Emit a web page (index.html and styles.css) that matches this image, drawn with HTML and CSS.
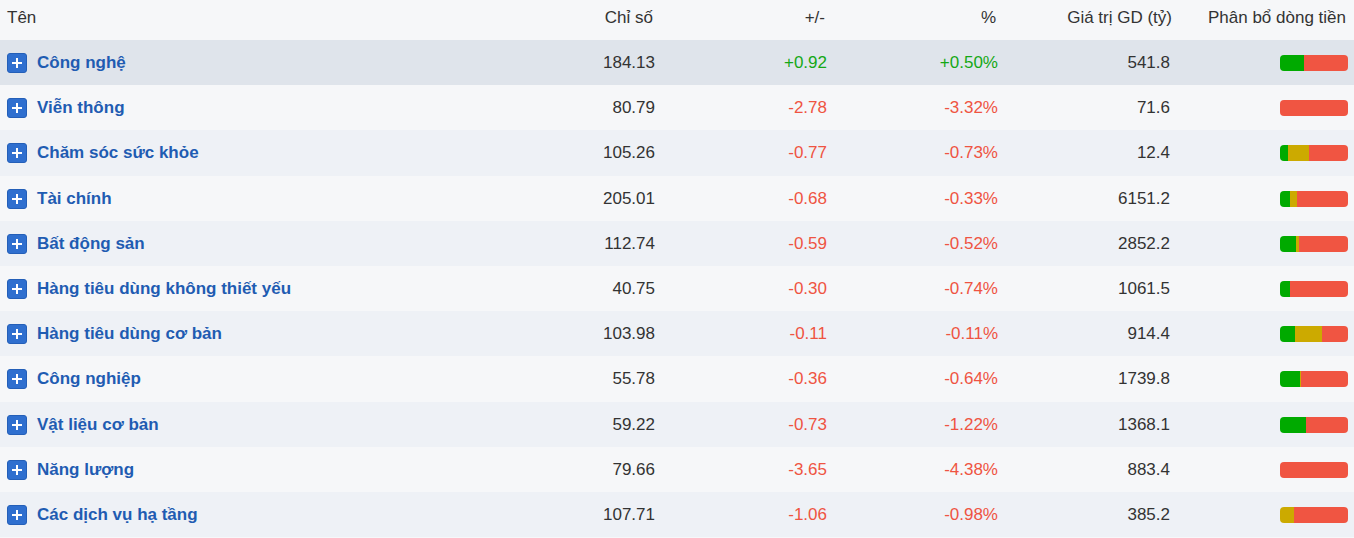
FILE: index.html
```html
<!DOCTYPE html>
<html lang="vi">
<head>
<meta charset="utf-8">
<link rel="stylesheet" href="styles.css">
</head>
<body>
<div class="table">
  <div class="row head">
    <div class="c name">Tên</div>
    <div class="c num">Chỉ số</div>
    <div class="c num">+/-</div>
    <div class="c num">%</div>
    <div class="c num gd">Giá trị GD (tỷ)</div>
    <div class="c num">Phân bổ dòng tiền</div>
  </div>

  <div class="row stripe hover">
    <div class="c name"><span class="plus"></span><span class="label">Công nghệ</span></div>
    <div class="c num">184.13</div>
    <div class="c num up">+0.92</div>
    <div class="c num up">+0.50%</div>
    <div class="c num gd">541.8</div>
    <div class="c num"><div class="bar"><i class="g" style="width:24px"></i><i class="r"></i></div></div>
  </div>

  <div class="row">
    <div class="c name"><span class="plus"></span><span class="label">Viễn thông</span></div>
    <div class="c num">80.79</div>
    <div class="c num down">-2.78</div>
    <div class="c num down">-3.32%</div>
    <div class="c num gd">71.6</div>
    <div class="c num"><div class="bar"><i class="r"></i></div></div>
  </div>

  <div class="row stripe">
    <div class="c name"><span class="plus"></span><span class="label">Chăm sóc sức khỏe</span></div>
    <div class="c num">105.26</div>
    <div class="c num down">-0.77</div>
    <div class="c num down">-0.73%</div>
    <div class="c num gd">12.4</div>
    <div class="c num"><div class="bar"><i class="g" style="width:8px"></i><i class="y" style="width:21px"></i><i class="r"></i></div></div>
  </div>

  <div class="row">
    <div class="c name"><span class="plus"></span><span class="label">Tài chính</span></div>
    <div class="c num">205.01</div>
    <div class="c num down">-0.68</div>
    <div class="c num down">-0.33%</div>
    <div class="c num gd">6151.2</div>
    <div class="c num"><div class="bar"><i class="g" style="width:10px"></i><i class="y" style="width:7px"></i><i class="r"></i></div></div>
  </div>

  <div class="row stripe">
    <div class="c name"><span class="plus"></span><span class="label">Bất động sản</span></div>
    <div class="c num">112.74</div>
    <div class="c num down">-0.59</div>
    <div class="c num down">-0.52%</div>
    <div class="c num gd">2852.2</div>
    <div class="c num"><div class="bar"><i class="g" style="width:16px"></i><i class="y" style="width:3px"></i><i class="r"></i></div></div>
  </div>

  <div class="row">
    <div class="c name"><span class="plus"></span><span class="label">Hàng tiêu dùng không thiết yếu</span></div>
    <div class="c num">40.75</div>
    <div class="c num down">-0.30</div>
    <div class="c num down">-0.74%</div>
    <div class="c num gd">1061.5</div>
    <div class="c num"><div class="bar"><i class="g" style="width:10px"></i><i class="r"></i></div></div>
  </div>

  <div class="row stripe">
    <div class="c name"><span class="plus"></span><span class="label">Hàng tiêu dùng cơ bản</span></div>
    <div class="c num">103.98</div>
    <div class="c num down">-0.11</div>
    <div class="c num down">-0.11%</div>
    <div class="c num gd">914.4</div>
    <div class="c num"><div class="bar"><i class="g" style="width:15px"></i><i class="y" style="width:27px"></i><i class="r"></i></div></div>
  </div>

  <div class="row">
    <div class="c name"><span class="plus"></span><span class="label">Công nghiệp</span></div>
    <div class="c num">55.78</div>
    <div class="c num down">-0.36</div>
    <div class="c num down">-0.64%</div>
    <div class="c num gd">1739.8</div>
    <div class="c num"><div class="bar"><i class="g" style="width:20px"></i><i class="y" style="width:1px"></i><i class="r"></i></div></div>
  </div>

  <div class="row stripe">
    <div class="c name"><span class="plus"></span><span class="label">Vật liệu cơ bản</span></div>
    <div class="c num">59.22</div>
    <div class="c num down">-0.73</div>
    <div class="c num down">-1.22%</div>
    <div class="c num gd">1368.1</div>
    <div class="c num"><div class="bar"><i class="g" style="width:26px"></i><i class="r"></i></div></div>
  </div>

  <div class="row">
    <div class="c name"><span class="plus"></span><span class="label">Năng lượng</span></div>
    <div class="c num">79.66</div>
    <div class="c num down">-3.65</div>
    <div class="c num down">-4.38%</div>
    <div class="c num gd">883.4</div>
    <div class="c num"><div class="bar"><i class="r"></i></div></div>
  </div>

  <div class="row stripe">
    <div class="c name"><span class="plus"></span><span class="label">Các dịch vụ hạ tầng</span></div>
    <div class="c num">107.71</div>
    <div class="c num down">-1.06</div>
    <div class="c num down">-0.98%</div>
    <div class="c num gd">385.2</div>
    <div class="c num"><div class="bar"><i class="y" style="width:14px"></i><i class="r"></i></div></div>
  </div>
</div>
</body>
</html>
```

FILE: styles.css
```css
* { box-sizing: border-box; }
html, body {
  margin: 0;
  padding: 0;
  background: #f6f7f9;
}
body {
  font-family: "Liberation Sans", Arial, sans-serif;
  font-size: 17px;
  color: #333333;
}
.table {
  width: 1354px;
}
.row {
  display: grid;
  grid-template-columns: 1fr 150px 172px 171px 174px 176px;
  align-items: center;
  height: 45.2px;
  padding: 0 6px 0 7px;
  background: #f6f7f9;
}
.row .c {
  padding-top: 1px;
}
.row.head {
  height: 40px;
}
.row.head .c {
  padding-top: 0;
  padding-bottom: 4px;
}
.row.head .num {
  padding-right: 2px;
}
.row.head .num.gd {
  padding-right: 0;
}
.row .num.gd {
  padding-right: 2px;
}
.row.stripe {
  background: #eef1f6;
}
.row.hover {
  background: #dfe4eb;
}
.c {
  white-space: nowrap;
}
.num {
  text-align: right;
  display: flex;
  justify-content: flex-end;
}
.name {
  display: flex;
  align-items: center;
}
.plus {
  position: relative;
  width: 20px;
  height: 20px;
  border-radius: 3px;
  background: #2f6fcf;
  border: 1px solid #245fb8;
  margin-right: 10px;
  flex: none;
}
.plus::before,
.plus::after {
  content: "";
  position: absolute;
  background: #ffffff;
  left: 50%;
  top: 50%;
  transform: translate(-50%, -50%);
}
.plus::before {
  width: 10px;
  height: 2px;
}
.plus::after {
  width: 2px;
  height: 10px;
}
.label {
  font-weight: bold;
  color: #1f5cb2;
}
.up {
  color: #15a815;
}
.down {
  color: #ef5442;
}
.bar {
  display: flex;
  width: 68px;
  height: 16px;
  border-radius: 4px;
  overflow: hidden;
}
.bar i {
  display: block;
  height: 100%;
  flex: none;
}
.bar .g { background: #00aa00; }
.bar .y { background: #ccaa00; }
.bar .r { background: #f05542; flex: 1; }
```
